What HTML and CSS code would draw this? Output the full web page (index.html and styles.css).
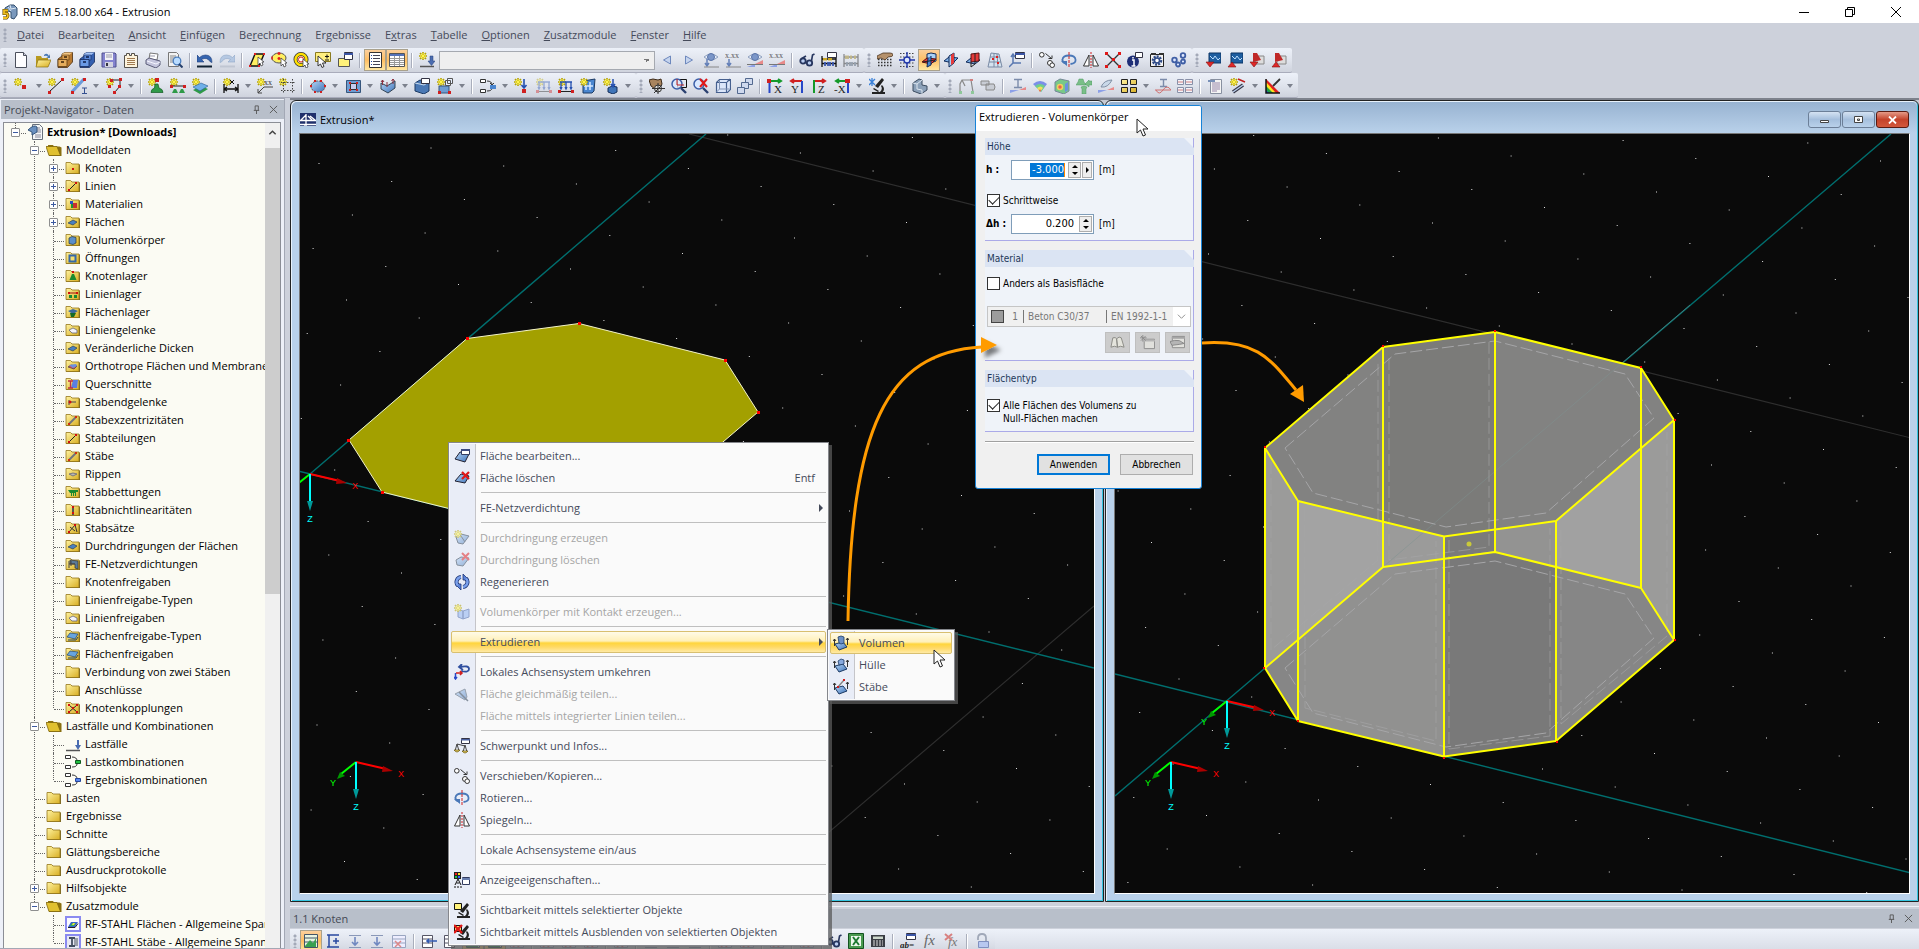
FILE: index.html
```html
<!DOCTYPE html>
<html lang="de">
<head>
<meta charset="utf-8">
<title>RFEM 5.18.00 x64 - Extrusion</title>
<link rel="stylesheet" href="styles.css">
</head>
<body>
<svg class="defs" aria-hidden="true">
<defs>
<linearGradient id="gy" x1="0" y1="0" x2="1" y2="1"><stop offset="0" stop-color="#fff3a0"/><stop offset="1" stop-color="#d8ae22"/></linearGradient>
<linearGradient id="gb" x1="0" y1="0" x2="1" y2="1"><stop offset="0" stop-color="#b4d4f6"/><stop offset="1" stop-color="#3f74b8"/></linearGradient>
</defs>
</svg>
<svg class="sprite" aria-hidden="true">
<symbol id="star" viewBox="0 0 16 16"><path d="M4 0v8M0 4h8M1 1l6 6M7 1L1 7" stroke="#b5a200" stroke-width="1.6"/><path d="M4 1v6M1 4h6M2 2l4 4M6 2L2 6" stroke="#fff450" stroke-width="1"/></symbol>
<symbol id="new" viewBox="0 0 16 16"><path d="M2.500 .5h8l3 3v12h-11z" fill="#fdfdff" stroke="#4a4f5c"/><path d="M10.500 .5v3h3" fill="#ccd" stroke="#4a4f5c"/></symbol>
<symbol id="open" viewBox="0 0 16 16"><path d="M1 4h5l1 2h6v8H1z" fill="#b89a20"/><path d="M3 8h13l-3 7H1z" fill="url(#gy)" stroke="#8a7010" stroke-width=".7"/><path d="M9 3q3-3 5 1l1-2v4h-4l2-1q-1-2-4-1z" fill="#4a7ab5"/></symbol>
<symbol id="cab1" viewBox="0 0 16 16"><path d="M1 7l4-3V2l3-1.500h7.500V10l-5 5.500H1z" fill="#b97a30" stroke="#4a2f10" stroke-width=".8"/><path d="M5 2l3-1.500h7.500L12 3H5z" fill="#f3c684"/><path d="M5 3h7v5H5z" fill="#dba050" stroke="#5a3a12" stroke-width=".6"/><path d="M1 7.500h9v7H1z" fill="#e5ad5c" stroke="#5a3a12" stroke-width=".8"/><path d="M4 10h3M7 5h3" stroke="#3a230a" stroke-width="1.400"/></symbol>
<symbol id="cab2" viewBox="0 0 16 16"><path d="M1 7l4-3V2l3-1.500h7.500V10l-5 5.500H1z" fill="#3560b0" stroke="#142a5c" stroke-width=".8"/><path d="M5 2l3-1.500h7.500L12 3H5z" fill="#a4c4f8"/><path d="M5 3h7v5H5z" fill="#5a88d8" stroke="#142a5c" stroke-width=".6"/><path d="M1 7.500h9v7H1z" fill="#6a9ae5" stroke="#142a5c" stroke-width=".8"/><path d="M4 10h3M7 5h3" stroke="#0c1c48" stroke-width="1.400"/></symbol>
<symbol id="save" viewBox="0 0 16 16"><path d="M1 1h13l1 1v13H1z" fill="#8483cf" stroke="#51508f"/><path d="M4 1h8v7H4z" fill="#f2f2f6"/><path d="M5 3h6M5 5h6" stroke="#99a"/><path d="M4 10h8v5H4z" fill="#d3d3e0"/><path d="M5 11h2v3H5z" fill="#334"/></symbol>
<symbol id="report" viewBox="0 0 16 16"><path d="M1.500 3.500h2v-2h3v2h2v-2h3v2h3v12h-13z" fill="#fdf3dc" stroke="#55504a"/><path d="M4 6.500h8M4 8.500h8M4 10.500h8M4 12.500h8" stroke="#a07a50"/></symbol>
<symbol id="print" viewBox="0 0 16 16"><path d="M4 7l1-6 8 1-1 6z" fill="#fff" stroke="#777"/><path d="M1 8l3-2 11 3v4l-4 3L1 12z" fill="#c4c5dc" stroke="#5b5c78"/><path d="M2 9l9 3 4-2" stroke="#f5f5ff" fill="none"/><path d="M5 4h5" stroke="#99a"/></symbol>
<symbol id="preview" viewBox="0 0 16 16"><path d="M1.500 .5h8l2 2v12h-10z" fill="#f2f2f2" stroke="#777"/><path d="M3 4h6M3 6h6M3 8h4M3 10h4" stroke="#888"/><circle cx="10" cy="9" r="3.800" fill="#b9dcff" stroke="#4a7dbd" stroke-width="1.300"/><path d="M12 12l3.500 3.500" stroke="#26406c" stroke-width="2"/></symbol>
<symbol id="undo" viewBox="0 0 16 16"><path d="M0 3v7h7L4.500 7.500q5.500-3 9 2.500l1.500 .5Q15 3 8.500 3 5 3 2.500 5.500z" fill="#3565b0" stroke="#1b3a78" stroke-width=".6"/><path d="M0 14.500h15" stroke="#123" stroke-width="2"/></symbol>
<symbol id="redo" viewBox="0 0 16 16"><path d="M16 3v7H9l2.500-2.500Q6 4.500 2.500 10l-1.500 .5Q1 3 7.500 3q3.500 0 6 2.500z" fill="#b5c8e2" stroke="#8fa6c6" stroke-width=".6"/><path d="M1 14.500h15" stroke="#c0c6d2" stroke-width="2"/></symbol>
<symbol id="selpar" viewBox="0 0 16 16"><path d="M1 14L6 2h9l-5 12z" fill="#ffef60" stroke="#111" stroke-width="1.400"/><path d="M5 1h2v2H5zM14 1h2v2h-2zM0 13h2v2H0zM9 13h2v2H9z" fill="#e02020"/><path d="M9 5v8l2-2 1 3 2-1-1-3h2z" fill="#fff" stroke="#333" stroke-width=".7"/></symbol>
<symbol id="selell" viewBox="0 0 16 16"><ellipse cx="8" cy="6" rx="7" ry="5" fill="#ffef60" stroke="#555"/><path d="M8 0v3M6.500 1.500h3M1 4.500v3M8 5v3M6.500 6.500h3" stroke="#e02020" stroke-width="1.500"/><path d="M10 6v8l2-2 1 3 2-1-1-3h2z" fill="#fff" stroke="#333" stroke-width=".7"/></symbol>
<symbol id="selcir" viewBox="0 0 16 16"><circle cx="8" cy="7.500" r="5.500" fill="#fdf8c0" stroke="#333" stroke-width="4"/><circle cx="8" cy="7.500" r="5.500" fill="none" stroke="#ffe000" stroke-width="2.400"/><circle cx="8" cy="7.500" r="2.500" fill="#fff" stroke="#e02020"/><path d="M10 7v8l2-2 1 3 2-1-1-3h2z" fill="#fff" stroke="#333" stroke-width=".7"/></symbol>
<symbol id="selpm" viewBox="0 0 16 16"><path d="M.5 .5h15v9H.5z" fill="#ffef80" stroke="#8a7a20"/><path d="M10 4.500h4M12 2.500v4M10 8h4" stroke="#111"/><path d="M3 4v10l2.500-2 1.500 3.500 2-1L7.500 11H11z" fill="#fff" stroke="#222" stroke-width=".9"/></symbol>
<symbol id="selwin" viewBox="0 0 16 16"><path d="M1.500 6.500h11v8h-11z" fill="#fff27a" stroke="#555"/><path d="M7.500 .5h8v7h-8z" fill="#fff" stroke="#334"/><path d="M7 1h9v2H7z" fill="#3b55a5"/></symbol>
<symbol id="list" viewBox="0 0 16 16"><path d="M2.500 .5h12v15h-12z" fill="#fff" stroke="#333"/><path d="M6 3.500h7M6 6.500h7M6 9.500h7M6 12.500h7" stroke="#445"/><path d="M4 3.500h1M4 6.500h1M4 9.500h1M4 12.500h1" stroke="#2344a0"/></symbol>
<symbol id="table" viewBox="0 0 16 16"><path d="M.5 1.500h15v13H.5z" fill="#fff" stroke="#555"/><path d="M1 2h14v2H1z" fill="#5572b8"/><path d="M1 6.500h14M1 8.500h14M1 10.500h14M1 12.500h14M5.500 4v10M10.500 4v10" stroke="#999"/></symbol>
<symbol id="lcase" viewBox="0 0 16 16"><use href="#star"/><path d="M11 4h3v5h2l-3.500 4.500L9 9h2z" fill="#4a6cb0" stroke="#24407c" stroke-width=".5"/><path d="M1 14.500h14" stroke="#555" stroke-width="1.500"/></symbol>
<symbol id="prev" viewBox="0 0 16 16"><path d="M11.500 4v8L4.500 8z" fill="#c5d4ee" stroke="#6d88bd"/></symbol>
<symbol id="next" viewBox="0 0 16 16"><path d="M4.500 4v8l7-4z" fill="#c5d4ee" stroke="#6d88bd"/></symbol>
<symbol id="eye1" viewBox="0 0 16 16"><path d="M1 5q7-6 14 0-7 6-14 0z" fill="#e8eef8" stroke="#8ea0bf"/><circle cx="8" cy="5" r="3.500" fill="#7b96c8" stroke="#5a74a8"/><path d="M4 7v6M2 11l2 3 2-3" stroke="#6480b8" stroke-width="1.500" fill="none"/><path d="M1 15h15" stroke="#888"/></symbol>
<symbol id="xx1" viewBox="0 0 16 16"><text x="0" y="6" font-size="8" font-family="Liberation Serif" fill="#555">x.xx</text><path d="M4 7v6M2 11l2 3 2-3" stroke="#6480b8" stroke-width="1.500" fill="none"/><path d="M1 15h15" stroke="#888"/></symbol>
<symbol id="eye2" viewBox="0 0 16 16"><path d="M1 5q7-6 14 0-7 6-14 0z" fill="#e8eef8" stroke="#8ea0bf"/><circle cx="8" cy="5" r="3.500" fill="#7b96c8" stroke="#5a74a8"/><path d="M0 15h8v-3z" fill="#8ca0e8"/><path d="M8 12l8-4v4z" fill="#e88a8a"/><path d="M0 12.500h16" stroke="#777"/></symbol>
<symbol id="xx2" viewBox="0 0 16 16"><text x="0" y="6" font-size="8" font-family="Liberation Serif" fill="#555">x.xx</text><path d="M0 15h8v-3z" fill="#8ca0e8"/><path d="M8 12l8-4v4z" fill="#e88a8a"/><path d="M0 12.500h16" stroke="#777"/></symbol>
<symbol id="glass" viewBox="0 0 16 16"><circle cx="4" cy="9" r="2.700" fill="#b9cdf0" stroke="#26355e" stroke-width="1.800"/><circle cx="10.500" cy="11" r="2.700" fill="#b9cdf0" stroke="#26355e" stroke-width="1.800"/><path d="M2 7l5-3M12.500 9l1-6 2-1" stroke="#26355e" stroke-width="1.600" fill="none"/></symbol>
<symbol id="abac" viewBox="0 0 16 16"><path d="M1 4v11M15 4v11M1 7h14M1 11.500h14" stroke="#111" stroke-width="1.300"/><path d="M3 6v2.500M5 6v2.500M8 6v2.500M10 6v2.500" stroke="#d8b020" stroke-width="1.800"/><path d="M4 10v4M7 10v4M9 10v4M12 10v4" stroke="#3a58b0" stroke-width="1.800"/><path d="M6.500 .5h9v5h-9z" fill="#fff" stroke="#334"/></symbol>
<symbol id="abac2" viewBox="0 0 16 16"><g opacity=".5"><path d="M1 2v13M15 2v13M1 5h14M1 11.500h14" stroke="#333" stroke-width="1.300"/><path d="M3 3.500V7M5 3.500V7M8 3.500V7M12 3.500V7" stroke="#a08820" stroke-width="1.800"/><path d="M4 10v4M7 10v4M9 10v4M12 10v4" stroke="#567" stroke-width="1.800"/></g></symbol>
<symbol id="hand" viewBox="0 0 16 16"><path d="M1 7.500h15M1 10.500h15M1 13.500h15" stroke="#333" stroke-dasharray="1.500 1.500" stroke-width="1.500"/><path d="M0 4l6-3h7q3 0 3 2t-5 2l-3 3-4-2-4 1z" fill="#b5916c" stroke="#4c3622" stroke-width=".8"/></symbol>
<symbol id="snap" viewBox="0 0 16 16"><path d="M1 1.500h15M1 5h15M1 11h15M1 14.500h15" stroke="#444" stroke-dasharray="1.500 1.500"/><circle cx="8" cy="8" r="3" fill="#dce6ff" stroke="#1e35a8" stroke-width="1.400"/><path d="M8 0v5M8 11v5M0 8h5M11 8h5" stroke="#1e35a8" stroke-width="1.400"/></symbol>
<symbol id="wp1" viewBox="0 0 16 16"><path d="M6 2l4-1 5 1v7l-5 2-4-1z" fill="#a9d0f8" stroke="#102a5a"/><path d="M1 10l5-4 9 1-5 5z" fill="#e63a3a" stroke="#5a1010"/><path d="M7 6l-1 9 4-2V4" fill="#4a86d0" stroke="#102a5a"/><path d="M2 10l12-2" stroke="#222"/></symbol>
<symbol id="wp2" viewBox="0 0 16 16"><path d="M1 9l5-4 9 1-5 5z" fill="#7eb2ea" stroke="#102a5a"/><path d="M6 4l5-3v10l-5 4z" fill="#a9d0f8" stroke="#102a5a"/><path d="M8 3l3-2v10l-3 2z" fill="#e63a3a"/></symbol>
<symbol id="wp3" viewBox="0 0 16 16"><path d="M1 10l5-4 9 2-5 4z" fill="#7eb2ea" stroke="#102a5a"/><path d="M6 2l8-1v8l-8 1z" fill="#e63a3a" stroke="#5a1010"/><path d="M6 10v5l4-3V1" fill="none" stroke="#222"/></symbol>
<symbol id="wp4" viewBox="0 0 16 16"><path d="M1 15L4 1l8 1 3 13z" fill="#d5e2ef" stroke="#7a8ba5"/><path d="M3 5h10M2 10h12M7 1v14M10 2l1 13" stroke="#7a8ba5"/><path d="M5 7h2M9 5h2M10 11h2" stroke="#e02020" stroke-width="2"/></symbol>
<symbol id="axw" viewBox="0 0 16 16"><path d="M6.500 .5h9v6h-9z" fill="#fff" stroke="#334"/><path d="M6 1h10v2H6z" fill="#3b55a5"/><path d="M4 3v8h8M4 11l-4 4M2 5l2-3 2 3" stroke="#5a78b0" stroke-width="1.500" fill="none"/></symbol>
<symbol id="move" viewBox="0 0 16 16"><circle cx="2.800" cy="2.800" r="2.300" fill="#fff" stroke="#333"/><circle cx="11" cy="11" r="2.500" fill="#fff" stroke="#333"/><circle cx="13.200" cy="13.200" r="2.300" fill="#fff" stroke="#333"/><path d="M6.500 1.500l6 5M13 3.500v3H9.500" stroke="#333" fill="none"/></symbol>
<symbol id="rot" viewBox="0 0 16 16"><path d="M5 11.500Q1 10.500 1.500 7.500 2 3.500 8 3.500t6.500 4T9.500 12" fill="none" stroke="#4a78b8" stroke-width="1.800"/><path d="M0 9h6v5z" fill="#4a78b8"/><path d="M8 0v16" stroke="#d02020" stroke-dasharray="3 1"/></symbol>
<symbol id="mir" viewBox="0 0 16 16"><path d="M6 3v11H.5zM10 3v11h5.500z" fill="#fff" stroke="#333"/><path d="M8 0v16" stroke="#d02020" stroke-dasharray="2 1"/></symbol>
<symbol id="cross" viewBox="0 0 16 16"><path d="M1 1l14 14M15 1L1 15" stroke="#333" stroke-width="1.400"/><path d="M0 0h3v3H0zM13 0h3v3h-3zM0 13h3v3H0zM13 13h3v3h-3zM7 6h3v3H7z" fill="#e01818"/></symbol>
<symbol id="info" viewBox="0 0 16 16"><circle cx="6" cy="9.500" r="6" fill="#1f2f78"/><path d="M5 8h2v6M4.500 14h4M6 5v1.500" stroke="#fff" stroke-width="1.500" fill="none"/><path d="M8.500 .5h7v5h-7z" fill="#fff" stroke="#334"/></symbol>
<symbol id="cfg" viewBox="0 0 16 16"><path d="M1.500 2.500h13v12h-13z" fill="#f3f3f3" stroke="#222"/><path d="M2 1h5v2H2zM10 1h5v2h-5z" fill="#333"/><circle cx="8" cy="8.500" r="4" fill="none" stroke="#2f4b88" stroke-width="2.500" stroke-dasharray="2 1"/><circle cx="8" cy="8.500" r="2.500" fill="#fff" stroke="#2f4b88" stroke-width="1.500"/></symbol>
<symbol id="gears" viewBox="0 0 16 16"><g fill="#dfe8ff" stroke="#3f5fa5" stroke-width="1.800"><circle cx="12" cy="3.500" r="2.300"/><circle cx="3.500" cy="8" r="2.300"/><circle cx="7" cy="12.500" r="2"/><circle cx="12" cy="9.500" r="2"/></g></symbol>
<symbol id="mdown" viewBox="0 0 16 16"><path d="M4 1h12v10H4z" fill="#1e5ea0" stroke="#0c3464"/><path d="M5 4l3 3 2-3 3 4 2-2" stroke="#bfe0ff" fill="none"/><path d="M1 10h8l-4 5z" fill="#e02828" stroke="#801010" stroke-width=".6"/></symbol>
<symbol id="mup" viewBox="0 0 16 16"><path d="M4 1h12v10H4z" fill="#1e5ea0" stroke="#0c3464"/><path d="M5 4l3 3 2-3 3 4 2-2" stroke="#bfe0ff" fill="none"/><path d="M1 15h8l-4-5z" fill="#e02828" stroke="#801010" stroke-width=".6"/></symbol>
<symbol id="pdf1" viewBox="0 0 16 16"><path d="M6 4h9v8H6z" fill="#ddd" stroke="#888"/><path d="M4 1h4l4 7-8 2z" fill="#c02828"/><path d="M1 10h8l-4 5z" fill="#e02828" stroke="#801010" stroke-width=".6"/></symbol>
<symbol id="pdf2" viewBox="0 0 16 16"><path d="M6 4h9v8H6z" fill="#ddd" stroke="#888"/><path d="M4 1h4l4 7-8 2z" fill="#c02828"/><path d="M1 15h8l-4-5z" fill="#e02828" stroke="#801010" stroke-width=".6"/></symbol>
<symbol id="node" viewBox="0 0 16 16"><use href="#star"/><path d="M8 7h4v4H8z" fill="#d02020"/></symbol>
<symbol id="line" viewBox="0 0 16 16"><use href="#star"/><path d="M1 14L14 2" stroke="#111"/><path d="M0 13h3v3H0zM13 0h3v3h-3z" fill="#d02020"/></symbol>
<symbol id="memb" viewBox="0 0 16 16"><use href="#star"/><path d="M1 14L13 1" stroke="#6d9bd8" stroke-width="3"/><path d="M0 13h3v3H0zM12 0h3v3h-3z" fill="#d02020"/><path d="M11 10h5M11 15.500h5M13.500 10v5" stroke="#345090"/></symbol>
<symbol id="poly" viewBox="0 0 16 16"><use href="#star"/><path d="M5 2h9v6l-5 6" stroke="#222" fill="none"/><path d="M4 1h3v3H4zM13 0h3v3h-3zM12 7h3v3h-3zM7 13h3v3H7zM2 7h3v3H2z" fill="#d02020"/></symbol>
<symbol id="nsup" viewBox="0 0 16 16"><use href="#star"/><path d="M7 6h3l1 4q4 1 4 4.500H3q0-3.500 3.500-4.500z" fill="#2f9a48" stroke="#115a22" stroke-width=".7"/><path d="M7 0h4v4H7z" fill="#d02020"/></symbol>
<symbol id="lsup" viewBox="0 0 16 16"><use href="#star"/><path d="M2 8h13" stroke="#222"/><path d="M0 7h3v3H0zM13 7h3v3h-3z" fill="#d02020"/><path d="M4 11h2l2 4H2zM11 11h2l2 4H9z" fill="#2f9a48"/></symbol>
<symbol id="fsup" viewBox="0 0 16 16"><use href="#star"/><path d="M1 12l8-4 7 3-8 5z" fill="#2f9a48"/><path d="M1 9l8-4 7 3-8 5z" fill="#6fb0e8" stroke="#285a90" stroke-width=".6"/></symbol>
<symbol id="dim" viewBox="0 0 16 16"><use href="#star"/><path d="M1 6v9M15 6v9M1 11h14M4 9l-3 2 3 2M12 9l3 2-3 2" stroke="#111" fill="none" stroke-width="1.300"/><path d="M7 2l4 4M11 2L7 6" stroke="#111"/></symbol>
<symbol id="lead" viewBox="0 0 16 16"><use href="#star"/><path d="M1 15L7 9h9M1 11v4h4" stroke="#444" fill="none"/><text x="7" y="7" font-size="8" font-family="Liberation Serif" fill="#333">xx</text></symbol>
<symbol id="grid" viewBox="0 0 16 16"><use href="#star"/><path d="M2 4.500h14M2 12.500h14M4.500 1v15M13.500 1v15" stroke="#444" stroke-dasharray="1.500 1.500"/></symbol>
<symbol id="surf" viewBox="0 0 16 16"><ellipse cx="8" cy="8.500" rx="7" ry="5.500" fill="url(#gb)" stroke="#555" stroke-dasharray="2 1"/><path d="M4 2h2v2H4zM10 2h2v2h-2zM0 7h2v2H0zM14 7h2v2h-2zM4 13h2v2H4zM10 13h2v2h-2z" fill="#d02020"/></symbol>
<symbol id="opn" viewBox="0 0 16 16"><path d="M1.500 2.500h14v12h-14z" fill="#6e9cd2" stroke="#35557c"/><path d="M5.500 5.500h6v6h-6z" fill="#c8ccf0" stroke="#333"/><path d="M4 4h2v2H4zM11 4h2v2h-2zM4 11h2v2H4zM11 11h2v2h-2z" fill="#d02020"/></symbol>
<symbol id="shell" viewBox="0 0 16 16"><path d="M1 5l6 3 8-5v7l-7 5-7-4z" fill="url(#gb)" stroke="#345"/><path d="M2.500 7V2M7 9V4M13 6V1M1 4l1.500-2L4 4M11.500 3L13 1l1.500 2" stroke="#8a3040" fill="none"/></symbol>
<symbol id="solid" viewBox="0 0 16 16"><path d="M1 5l5-3 9 2v9l-5 3-9-3z" fill="#4a78b4" stroke="#1c3a64"/><path d="M1 5l9 2 5-3" stroke="#cde" fill="none"/><path d="M7.500 .5h8v5h-8z" fill="#fff" stroke="#334"/></symbol>
<symbol id="solid2" viewBox="0 0 16 16"><use href="#star"/><path d="M2 8h10v7H2z" fill="#6e9cd2" stroke="#35557c"/><path d="M8.500 2.500h5v5h-5zM10.500 .5h5v5h-5z" fill="#e8f0ff" stroke="#555"/><path d="M1 13h3v3H1zM11 13h3v3h-3z" fill="#d02020"/></symbol>
<symbol id="comb" viewBox="0 0 16 16"><path d="M.5 1.500h5v3h-5zM.5 11.500h5v3h-5z" fill="#fff" stroke="#333"/><path d="M7 3q5 0 5 4M7 13q5 0 5-3M10 5l2 2 2-2" stroke="#333" fill="none"/><path d="M10 7h6v4h-6z" fill="#4a86d0"/></symbol>
<symbol id="combg" viewBox="0 0 16 16"><path d="M.5 1.500h5v3h-5zM.5 11.500h5v3h-5z" fill="#fff" stroke="#333"/><path d="M7 3q5 0 5 4M7 13q5 0 5-3" stroke="#333" fill="none"/><path d="M10.500 6.500h5v3h-5z" fill="#20c040" stroke="#0c5a1c"/></symbol>
<symbol id="combb" viewBox="0 0 16 16"><path d="M.5 1.500h5v3h-5zM.5 11.500h5v3h-5z" fill="#fff" stroke="#333"/><path d="M7 3q5 0 5 4M7 13q5 0 5-3" stroke="#333" fill="none"/><path d="M10.500 6.500h5v3h-5z" fill="#5a8af0" stroke="#24449a"/></symbol>
<symbol id="nload" viewBox="0 0 16 16"><use href="#star"/><path d="M10 1v9M7.500 7l2.500 3 2.500-3" stroke="#2450b0" stroke-width="1.600" fill="none"/><path d="M8 11h4v4H8z" fill="#d02020"/></symbol>
<symbol id="mload" viewBox="0 0 16 16"><use href="#star"/><path d="M2 4h12M3 4v7M8 4v7M13 4v7M2 9l1 2 1-2M7 9l1 2 1-2M12 9l1 2 1-2" stroke="#2450b0" stroke-width="1.300" fill="none"/><path d="M1 13.500h14" stroke="#222"/><path d="M0 12h3v3H0zM13 12h3v3h-3z" fill="#d02020"/></symbol>
<symbol id="sload" viewBox="0 0 16 16"><path d="M3 3l12-2-1 12-2 2H3z" fill="#4a86d0" stroke="#1c3a64"/><path d="M6 5v7M10 4v8M4 8h9" stroke="#d5e8ff" stroke-width="1.500"/><use href="#star"/></symbol>
<symbol id="vload" viewBox="0 0 16 16"><use href="#star"/><path d="M5 10l4-2 5 1v5l-4 2-5-2z" fill="#3f74b8" stroke="#16305a"/><path d="M10 1v8M8 6l2 3 2-3" stroke="#2450b0" stroke-width="1.500" fill="none"/></symbol>
<symbol id="pan" viewBox="0 0 16 16"><path d="M0 2l4-1 5 1 3-1 1 5-2 4-5 1-4-3z" fill="#a8845e" stroke="#3c2a18"/><circle cx="9" cy="10.500" r="3.500" fill="#ddd" stroke="#333"/><path d="M9 5v11M3 10.500h13M5 15l8-8" stroke="#333"/></symbol>
<symbol id="zoomw" viewBox="0 0 16 16"><path d="M6.500 1.500h9v8h-9z" fill="none" stroke="#111"/><circle cx="6" cy="6" r="5" fill="#d8e8ff" fill-opacity=".8" stroke="#3a5ea8" stroke-width="1.500"/><path d="M10 10l5 5" stroke="#2a4070" stroke-width="2.400"/><path d="M6 1v6h7" stroke="#c02020" fill="none"/></symbol>
<symbol id="zoomx" viewBox="0 0 16 16"><circle cx="6" cy="6" r="5" fill="#d8e8ff" stroke="#3a5ea8" stroke-width="1.500"/><path d="M10 10l5 5" stroke="#2a4070" stroke-width="2.400"/><path d="M7 1l7 8M14 1L7 9" stroke="#e01818" stroke-width="2"/></symbol>
<symbol id="cube" viewBox="0 0 16 16"><path d="M1.500 4.500l3-3h11v10l-3 3h-11zM1.500 4.500h10v10M12 4l3-3" fill="#dbe6fa" stroke="#46608f" stroke-width="1.200"/><path d="M4.500 2v9h10M4.500 11l-3 3" stroke="#8093b5" fill="none"/></symbol>
<symbol id="boxes" viewBox="0 0 16 16"><g fill="#cfd9ee" stroke="#53698f"><path d="M8.500 .5h7v6h-7z"/><path d="M4.500 4.500h7v6h-7z"/><path d="M.5 9.500h7v6h-7z"/></g></symbol>
<symbol id="vx" viewBox="0 0 16 16"><path d="M3 3h11M11 1l3 2-3 2" stroke="#159a2a" stroke-width="2" fill="none"/><path d="M2.500 2v13" stroke="#2848c8" stroke-width="2"/><path d="M0 1h4v4H0z" fill="#d02020"/><text x="7" y="15" font-size="11" font-family="Liberation Serif" fill="#222">X</text></symbol>
<symbol id="vy" viewBox="0 0 16 16"><path d="M13 3H2M5 1L2 3l3 2" stroke="#d02020" stroke-width="2" fill="none"/><path d="M13 3v12" stroke="#2848c8" stroke-width="2"/><text x="2" y="15" font-size="11" font-family="Liberation Serif" fill="#222">Y</text></symbol>
<symbol id="vz" viewBox="0 0 16 16"><path d="M3 3h11M11 1l3 2-3 2" stroke="#d02020" stroke-width="2" fill="none"/><path d="M3 2v13" stroke="#159a2a" stroke-width="2"/><text x="7" y="15" font-size="11" font-family="Liberation Serif" fill="#222">Z</text></symbol>
<symbol id="vmx" viewBox="0 0 16 16"><path d="M13 3H2M5 1L2 3l3 2" stroke="#159a2a" stroke-width="2" fill="none"/><path d="M14 4v11" stroke="#2848c8" stroke-width="2"/><path d="M11 1h5v4h-5z" fill="#d02020"/><text x="0" y="15" font-size="11" font-family="Liberation Serif" fill="#222">-X</text></symbol>
<symbol id="micro" viewBox="0 0 16 16"><path d="M0 1l6 6M6 1L0 7M3 0v8" stroke="#3a80d8" stroke-width="1.300"/><path d="M6 8l7-8 2 2-6 8zM3 14h13v2H3zM13 7q4 4 0 8l-2-1q3-3 1-6zM5 10l5 3-1 1-5-3z" fill="#222"/></symbol>
<symbol id="microy" viewBox="0 0 16 16"><path d="M.5 1.500h7v6h-7z" fill="#fff27a" stroke="#111"/><path d="M6 9l7-8 2 2-6 8zM3 14h13v2H3zM13 7q4 4 0 8l-2-1q3-3 1-6zM5 10l5 3-1 1-5-3z" fill="#222"/></symbol>
<symbol id="microx" viewBox="0 0 16 16"><use href="#microy"/><path d="M0 1l8 8M8 1L0 9" stroke="#e01818" stroke-width="2.400"/></symbol>
<symbol id="blk" viewBox="0 0 16 16"><path d="M1 5l6-4 3 1v5l5 1v4l-6 4-8-3z" fill="#8ba0b8" stroke="#3c4c60"/><path d="M1 5l4 1v5l5 1M10 12v4M5 6l5-4" stroke="#dde6f0" fill="none"/></symbol>
<symbol id="frame" viewBox="0 0 16 16"><path d="M2 14V6l2-4h9l2 12M4 2l3 6" stroke="#888" fill="none" stroke-width="1.200"/><path d="M1 13h3v3H1zM13 13h3v3h-3z" fill="#8fc89a"/><path d="M12 1h3v2h-3z" fill="#d08080"/></symbol>
<symbol id="tube" viewBox="0 0 16 16"><path d="M1 3h8v4H1zM6 6h8q2 3 0 6H6z" fill="#c8ccd4" stroke="#888"/></symbol>
<symbol id="ibeam" viewBox="0 0 16 16"><path d="M4 1.500h8M4 9.500h8M8 2v7" stroke="#7c8cab" stroke-width="1.400"/><path d="M0 15l9-3H0z" fill="#8ca0e8"/><path d="M9 12l7-3v3z" fill="#e88a8a"/></symbol>
<symbol id="rainb" viewBox="0 0 16 16"><path d="M1 6q7-6 14 0l-6 8z" fill="#7b8fe8"/><path d="M3 8q5-4 10 0l-4 6z" fill="#6fd08a"/><path d="M5 10q4-3 6 0l-3 4z" fill="#f0e060"/><path d="M7 12q1-1 2 0l-1 2z" fill="#e85050"/></symbol>
<symbol id="rcube" viewBox="0 0 16 16"><path d="M1 4l5-3 9 2v10l-5 3-9-3z" fill="#78c888" stroke="#789"/><circle cx="6" cy="9" r="2.500" fill="#e86050" stroke="#f0d060" stroke-width="1.500"/><path d="M11 6l3-2v8l-3 2z" fill="#6a90e0"/></symbol>
<symbol id="react" viewBox="0 0 16 16"><path d="M3 1h4l1 3 2 3H0l2-3zM5 9l3-1 3 1-1 2v5H6v-5zM16 3v4h-3v2l-4-3 4-4v1z" fill="#7abf88" stroke="#4f9a60" stroke-width=".5"/></symbol>
<symbol id="stress" viewBox="0 0 16 16"><path d="M3 9q3-7 11-7-4 8-11 7z" fill="#c9d8e8" stroke="#8090a5"/><path d="M0 15l9-3H0z" fill="#8ca0e8"/><path d="M9 12l7-3v3z" fill="#e88a8a"/></symbol>
<symbol id="four" viewBox="0 0 16 16"><g fill="url(#gy)" stroke="#222"><path d="M.5 1.500h6v5h-6zM9.500 1.500h6v5h-6zM.5 9.500h6v5h-6zM9.500 9.500h6v5h-6z"/></g></symbol>
<symbol id="wave" viewBox="0 0 16 16"><path d="M5 1.500h7M5 8.500h7M8.500 2v6" stroke="#7c8cab" stroke-width="1.400"/><path d="M0 12h16M1 12q3 6 7 0t8 0" stroke="#d07070" fill="none"/></symbol>
<symbol id="tbl4" viewBox="0 0 16 16"><g fill="#f4f4fa" stroke="#8890a8"><path d="M.5 1.500h6v5h-6zM8.500 1.500h7v5h-7zM.5 9.500h6v5h-6zM8.500 9.500h7v5h-7z"/></g><path d="M1 4h5M9 4h6M1 12h5M9 12h6" stroke="#d08080"/></symbol>
<symbol id="page" viewBox="0 0 16 16"><path d="M3.500 1.500h11v14h-11z" fill="#f4f4f4" stroke="#8890a0"/><path d="M5 5h8M5 7h8M5 9h8M5 11h8M5 13h5" stroke="#98a"/><path d="M1 2h7v2H1z" fill="#7890b8"/></symbol>
<symbol id="magic" viewBox="0 0 16 16"><use href="#star"/><path d="M3 14l10-7" stroke="#334" stroke-width="3.400"/><path d="M3 14l10-7" stroke="#b8cce8" stroke-width="1.500"/><path d="M8 1l7 3" stroke="#c02020" stroke-width="1.500"/></symbol>
<symbol id="spec" viewBox="0 0 16 16"><path d="M1 1v14h14z" fill="#e02020"/><path d="M1 4v11h10z" fill="#ffe020"/><path d="M1 8v7h7z" fill="#20a040"/><path d="M1 12v3h3z" fill="#2040e0"/><path d="M1 1v14h14" stroke="#111" stroke-width="1.500" fill="none"/><path d="M8 8l7-7" stroke="#333" stroke-width="1.800"/></symbol>
<symbol id="fold" viewBox="0 0 16 16"><path d="M1 3h5l1.500 1.500H15V14H1z" fill="#7a6a2a"/><path d="M1 2.500h4.500L7 4h7v9.500H1z" fill="url(#gy)" stroke="#94761a" stroke-width=".8"/></symbol>
<symbol id="foldo" viewBox="0 0 16 16"><path d="M2 3h5l1 1.500h5.500l2 1V14H3z" fill="#8a7010"/><path d="M0 4.500h11l3.500 9H3z" fill="#e0c030" stroke="#7d650c" stroke-width=".8"/></symbol>
<symbol id="f-node" viewBox="0 0 16 16"><use href="#fold"/><path d="M7 8h2v2H7z" fill="#d01010"/></symbol>
<symbol id="f-line" viewBox="0 0 16 16"><use href="#fold"/><path d="M4 12l7-7" stroke="#222"/><path d="M3 11h2v2H3zM10 4h2v2h-2z" fill="#d01010"/></symbol>
<symbol id="f-mat" viewBox="0 0 16 16"><use href="#fold"/><path d="M5 5h3v3H5z" fill="#2a50c0"/><path d="M6 8h3v4H6z" fill="#1a9a30"/><path d="M8 7h4v5H8z" fill="#c83030"/></symbol>
<symbol id="f-surf" viewBox="0 0 16 16"><use href="#fold"/><path d="M3 9l5-3 4 2-4 3z" fill="#4a80c0" stroke="#234" stroke-width=".6"/></symbol>
<symbol id="f-orth" viewBox="0 0 16 16"><use href="#fold"/><path d="M3 9l3-2 6 1-3 3z" fill="#e05060" stroke="#234" stroke-width=".6"/><path d="M4 7l7-1 1 2-4 2z" fill="#6a90e0"/></symbol>
<symbol id="f-vol" viewBox="0 0 16 16"><use href="#fold"/><path d="M4 6l3-1.500 4 1V11l-3 1.500-4-1z" fill="#5a8ec8" stroke="#234" stroke-width=".7"/></symbol>
<symbol id="f-opn" viewBox="0 0 16 16"><use href="#fold"/><path d="M4.500 5.500h6v6h-6z" fill="#f3df70" stroke="#3468a8" stroke-width="2"/></symbol>
<symbol id="f-ns" viewBox="0 0 16 16"><use href="#fold"/><path d="M7 6h2l2.500 6h-7z" fill="#1a8a30"/><path d="M7 3h2v2H7z" fill="#d01010"/></symbol>
<symbol id="f-ls" viewBox="0 0 16 16"><use href="#fold"/><path d="M3 7h9" stroke="#a01010"/><path d="M3 6h2v2H3zM11 6h2v2h-2z" fill="#d01010"/><path d="M4 9h3v3H4zM9 9h3v3H9z" fill="#1a8a30"/></symbol>
<symbol id="f-fs" viewBox="0 0 16 16"><use href="#fold"/><path d="M3 7l5-2 5 2-5 3z" fill="#3a6aa0"/><path d="M5 9h6l-2 4H6z" fill="#156a28"/></symbol>
<symbol id="f-wh" viewBox="0 0 16 16"><use href="#fold"/><path d="M4 8l4-2 4 2v3H7z" fill="#f4f4f8" stroke="#667" stroke-width=".8"/></symbol>
<symbol id="f-rib" viewBox="0 0 16 16"><use href="#fold"/><path d="M4 8l4-1 4 1-4 2z" fill="#b8b8b4" stroke="#667" stroke-width=".8"/></symbol>
<symbol id="f-i" viewBox="0 0 16 16"><use href="#fold"/><path d="M8 4h5l-1 8H6z" fill="#5a7ee0"/><path d="M3 5h5M3 12h5M5.500 5v7" stroke="#c03040" stroke-width="1.300"/></symbol>
<symbol id="f-eg" viewBox="0 0 16 16"><use href="#fold"/><path d="M4 6v5M4 8h7" stroke="#445"/><circle cx="5" cy="8" r="1.500" fill="#d01010"/></symbol>
<symbol id="f-mem" viewBox="0 0 16 16"><use href="#fold"/><path d="M4 12l7-7" stroke="#70737c" stroke-width="2"/><path d="M3 11h2v2H3zM10 4h2v2h-2z" fill="#d03010"/></symbol>
<symbol id="f-gr" viewBox="0 0 16 16"><use href="#fold"/><path d="M3 6h10v2h-2v4h-1V9H9v3H8V9H7v3H6V9H5z" fill="#1a8a30"/></symbol>
<symbol id="f-rv" viewBox="0 0 16 16"><use href="#fold"/><path d="M8 4v9" stroke="#555" stroke-width="2"/><path d="M7 4h2v2H7zM7 10h2v2H7z" fill="#d01010"/></symbol>
<symbol id="f-set" viewBox="0 0 16 16"><use href="#fold"/><path d="M4 12l6-7 2 7M5 7l5 4" stroke="#333" fill="none"/><path d="M3 11h2v2H3zM9 4h2v2H9z" fill="#d01010"/></symbol>
<symbol id="f-mesh" viewBox="0 0 16 16"><use href="#fold"/><path d="M5 4l8 1v8l-3-1V8H5z" fill="#5a7a98" stroke="#333" stroke-width=".7"/><path d="M4 5v7M6 5v5M4 8h6" stroke="#444"/></symbol>
<symbol id="f-rel" viewBox="0 0 16 16"><use href="#fold"/><path d="M2 9l3-4 8 1-3 5z" fill="#66a4e0" stroke="#246" stroke-width=".7"/><path d="M3 12h8l2-3" stroke="#246" fill="none"/></symbol>
<symbol id="f-cpl" viewBox="0 0 16 16"><use href="#fold"/><path d="M4 5l8 7M12 5l-8 7" stroke="#222"/><path d="M3 4h2v2H3zM11 4h2v2h-2zM3 11h2v2H3zM11 11h2v2h-2zM7 7h2v2H7z" fill="#d01010"/></symbol>
<symbol id="t-root" viewBox="0 0 16 16"><path d="M5.500 .5h7l3 3v12h-10z" fill="#f4f6f8" stroke="#68707c"/><path d="M9 4h4M10 6h4M10 8h4M8 11h6M8 13h6" stroke="#889"/><path d="M1 6q6-6 9-3v5l-5 3v-3z" fill="#6a90c0" stroke="#35557c"/></symbol>
<symbol id="t-lc" viewBox="0 0 16 16"><path d="M12 4h2v5h2l-3 5-3-5h2z" fill="#4a6cb0"/><path d="M1 14.500h14" stroke="#555" stroke-width="1.500"/></symbol>
<symbol id="t-m1" viewBox="0 0 16 16"><path d="M1 1h14v14H1z" fill="#fafaff" stroke="#8a8af0" stroke-width="2"/><path d="M3 11l3-5h7l-3 5z" fill="#3a60d0"/><path d="M5 10l2-3h4l-2 3z" fill="#30b060"/><path d="M7 9l1-2h2l-1 2z" fill="#f0e040"/><path d="M3 11.500h7l3-4" stroke="#222" fill="none"/></symbol>
<symbol id="t-m2" viewBox="0 0 16 16"><path d="M1 1h14v14H1z" fill="#e8e8f4" stroke="#8a8af0" stroke-width="2"/><path d="M9 4h4v8H9z" fill="#9a9ea8"/><path d="M4 4h6M4 12h6M7 4v8" stroke="#444e60" stroke-width="1.800" fill="none"/></symbol>
<symbol id="c-edit" viewBox="0 0 16 16"><path d="M1 11l5-7 9 2-4 8z" fill="url(#gb)" stroke="#223"/><path d="M7.500 1.500h8v5h-8z" fill="#fff" stroke="#333c60"/><path d="M7 1h9v2H7z" fill="#3b4a80"/></symbol>
<symbol id="c-del" viewBox="0 0 16 16"><path d="M1 11l6-7 8 2-4 7z" fill="url(#gb)" stroke="#223"/><path d="M8 2l7 7M15 2L8 9" stroke="#e01818" stroke-width="2.200"/></symbol>
<symbol id="c-int" viewBox="0 0 16 16"><g opacity=".5"><path d="M2 7l5-3 8 2-6 8-5-1z" fill="url(#gb)" stroke="#234"/><path d="M5 3l6 9" stroke="#234"/><use href="#star"/></g></symbol>
<symbol id="c-intx" viewBox="0 0 16 16"><g opacity=".5"><path d="M2 8l5-3 8 1-6 8-6-1z" fill="url(#gb)" stroke="#234"/><path d="M8 1l7 7M15 1L8 8" stroke="#e01818" stroke-width="2"/></g></symbol>
<symbol id="c-reg" viewBox="0 0 16 16"><g fill="none" stroke="#1c3474" stroke-width="4"><path d="M7 3a5 5 0 0 0-3 8.500M9 13a5 5 0 0 0 3-8.500"/></g><path d="M1 10h6v6zM15 6H9V0z" fill="#5a82d8" stroke="#1c3474" stroke-width=".8"/><g fill="none" stroke="#7aa0ec" stroke-width="2.400"><path d="M7 3a5 5 0 0 0-3 8.500M9 13a5 5 0 0 0 3-8.500"/></g></symbol>
<symbol id="c-vol" viewBox="0 0 16 16"><g opacity=".55"><path d="M4 5l5 2v8l-5-2zM9 7l6-2v8l-6 2z" fill="#94b8f0" stroke="#4a68a8"/><use href="#star"/></g></symbol>
<symbol id="c-axis" viewBox="0 0 16 16"><path d="M6 3q9-2 9 2t-8 2M8 0L5 3l4 3" fill="none" stroke="#2f4fa0" stroke-width="1.800"/><path d="M1.500 9v6M0 13l1.500 2L3 13" stroke="#2848c8" stroke-width="1.500" fill="none"/><path d="M2 9h6M6 7l2 2-2 2" stroke="#d02020" stroke-width="1.600" fill="none"/></symbol>
<symbol id="c-div" viewBox="0 0 16 16"><g opacity=".5"><path d="M1 8l10-5 2 8-2 3z" fill="url(#gb)" stroke="#456"/><path d="M5 6l9 9" stroke="#234" stroke-width="1.500"/></g></symbol>
<symbol id="c-scale" viewBox="0 0 16 16"><path d="M7.500 .5h8v5h-8z" fill="#fff" stroke="#334"/><path d="M7 1h9v1.500H7z" fill="#4a60a0"/><path d="M3 6l8 2M3 6l-2 7M3 6l2 7M11 7l-2 7M11 7l2 7" stroke="#444"/><path d="M0 12h6q-3 4-6 0zM8 13h6q-3 4-6 0z" fill="#e8d060" stroke="#665510" stroke-width=".7"/></symbol>
<symbol id="c-disp" viewBox="0 0 16 16"><path d="M0 0h7v7H0z" fill="#222"/><path d="M1 1h2v2H1z" fill="#f02020"/><path d="M4 1h2v2H4z" fill="#ffe020"/><path d="M1 4h2v2H1z" fill="#20c040"/><path d="M4 4h2v2H4z" fill="#3060ff"/><path d="M4 7L1 13M4 7l3 6M2.500 11h3" stroke="#111" fill="none"/><path d="M0 15h8" stroke="#111" stroke-dasharray="2 1"/><path d="M8.500 5.500h7v7h-7z" fill="#fff" stroke="#333c60"/><path d="M8 6h8v2H8z" fill="#6a80b0"/></symbol>
<symbol id="c-ev" viewBox="0 0 16 16"><path d="M2 9l8-2 4 5-8 3z" fill="url(#gb)" stroke="#1c3a64"/><path d="M5 2l3-1 3 1v6l-3 1-2-1z" fill="#6a90c8" stroke="#1c3a64" stroke-width=".8"/><path d="M1.500 11V4M0 6l1.500-2L3 6M14.500 10V3M13 5l1.500-2L16 5" stroke="#333" fill="none"/></symbol>
<symbol id="c-eh" viewBox="0 0 16 16"><path d="M2 9l8-2 4 5-8 3z" fill="url(#gb)" stroke="#1c3a64"/><path d="M5 4l3-2 3 1v4l-5 1z" fill="#88aade" stroke="#1c3a64" stroke-width=".8"/><path d="M1.500 11V4M0 6l1.500-2L3 6M14.500 10V3M13 5l1.500-2L16 5" stroke="#333" fill="none"/></symbol>
<symbol id="c-es" viewBox="0 0 16 16"><path d="M2 9l8-2 4 5-8 3z" fill="url(#gb)" stroke="#1c3a64"/><path d="M5 8l6-7" stroke="#888" stroke-width="1.400"/><path d="M4 7h2v2H4zM10 0h2v2h-2z" fill="#d02020"/><path d="M1.500 11V4M0 6l1.500-2L3 6M14.500 10V3M13 5l1.500-2L16 5" stroke="#333" fill="none"/></symbol>
<symbol id="b-edit" viewBox="0 0 16 16"><path d="M1.500 1.500h13v13h-13z" fill="#e8f4e0" stroke="#456"/><path d="M1 5h14M1 9h14" stroke="#456"/><path d="M2 13l5-6 3 3 3-5v9H2z" fill="#3aa050"/></symbol>
<symbol id="b-ins" viewBox="0 0 16 16"><path d="M2 2h12M2 14h12M4 2v12" stroke="#2848a0" stroke-width="1.500"/><path d="M8 8h6M11 5v6" stroke="#2848a0" stroke-width="1.500"/></symbol>
<symbol id="b-dn" viewBox="0 0 16 16"><path d="M2 2.500h12M2 14.500h12" stroke="#8a98b8"/><path d="M8 4v7M5 9l3 3 3-3" stroke="#7088c0" stroke-width="1.600" fill="none"/></symbol>
<symbol id="b-x" viewBox="0 0 16 16"><path d="M1.500 2.500h13v12h-13z" fill="#eef" stroke="#99a5c0"/><path d="M1 6h14M1 10h14" stroke="#99a5c0"/><path d="M4 8l6 6M10 8l-6 6" stroke="#d88" stroke-width="1.500"/></symbol>
<symbol id="b-col" viewBox="0 0 16 16"><path d="M1.500 2.500h10v12h-10z" fill="#fff" stroke="#556"/><path d="M2 6h9M2 10h9" stroke="#556"/><path d="M6 8h10M8 6L6 8l2 2" stroke="#2f58b0" stroke-width="1.600" fill="none"/></symbol>
<symbol id="b-xls" viewBox="0 0 16 16"><path d="M.5 .5h15v15H.5z" fill="#4a9a50" stroke="#125220"/><path d="M3 3h10v10H3z" fill="#eef8ee"/><path d="M5 4l6 8M11 4l-6 8" stroke="#1e7a32" stroke-width="2"/></symbol>
<symbol id="b-calc" viewBox="0 0 16 16"><path d="M1 2h14v12H1z" fill="#3a3d44"/><path d="M3 3.500h10v2.500H3z" fill="#cdd8cc"/><path d="M3 8h10M3 10h10M3 12h10" stroke="#ddd" stroke-dasharray="2 1"/></symbol>
<symbol id="b-ab" viewBox="0 0 16 16"><path d="M6.500 .5h9v6h-9z" fill="#fff" stroke="#334"/><path d="M6 1h10v2H6z" fill="#3b55a5"/><text x="0" y="15" font-size="9" font-weight="bold" font-style="italic" font-family="Liberation Serif" fill="#222">ab=</text></symbol>
<symbol id="b-fx" viewBox="0 0 16 16"><text x="2" y="12" font-size="15" font-style="italic" font-family="Liberation Serif" fill="#666">fx</text></symbol>
<symbol id="b-fxx" viewBox="0 0 16 16"><text x="4" y="13" font-size="13" font-style="italic" font-family="Liberation Serif" fill="#777">fx</text><path d="M1 1l7 6M8 1L1 7" stroke="#d88080" stroke-width="2"/></symbol>
<symbol id="b-lock" viewBox="0 0 16 16"><path d="M4 7V5q0-4 4-4t4 4v3" stroke="#a0a8b8" stroke-width="1.800" fill="none"/><path d="M4.500 8.500h10v6h-10z" fill="#b8c8f0" stroke="#8090c0"/></symbol>
<symbol id="cursor" viewBox="0 0 13 20"><path d="M1 1v14l3.500-3 2.500 6 2.500-1L7 11h5z" fill="#fff" stroke="#222"/></symbol>
<g id="triad" font-family="Liberation Sans" font-size="9" text-anchor="middle">
<path d="M0 0l28 6.500" stroke="#f00" stroke-width="2"/><path d="M27 4l10 5-11 1z" fill="#a00"/><text x="45" y="15" fill="#f00">X</text>
<path d="M0 0l-15 12" stroke="#0f0" stroke-width="2"/><path d="M-19 17l3-7 5 4z" fill="#090"/><text x="-23" y="24" fill="#0f0">Y</text>
<path d="M0 0v28" stroke="#0ff" stroke-width="2"/><path d="M-3 27h6l-3 10z" fill="#099"/><text x="0" y="48" fill="#0ff">Z</text>
</g>
<g id="d1"><path d="M0 0h1v1H0z" fill="#ddd"/></g>
<g id="d2"><use href="#d1"/><use href="#d1" x="72.700" y="18"/></g>
<g id="d4"><use href="#d2"/><use href="#d2" x="145.400" y="36"/></g>
<g id="d8"><use href="#d4"/><use href="#d4" x="290.800" y="72"/></g>
<g id="d16"><use href="#d8"/><use href="#d8" x="581.600" y="144"/></g>
<g id="d32"><use href="#d16"/><use href="#d16" x="1163.200" y="288"/></g>
<g id="e2"><use href="#d32"/><use href="#d32" x="-39.300" y="33.500"/></g>
<g id="e4"><use href="#e2"/><use href="#e2" x="-78.600" y="67"/></g>
<g id="e8"><use href="#e4"/><use href="#e4" x="-157.200" y="134"/></g>
<g id="e16"><use href="#e8"/><use href="#e8" x="-314.400" y="268"/></g>
<g id="e32"><use href="#e16"/><use href="#e16" x="-628.800" y="536"/></g>
</svg>

<header class="titlebar">
<svg class="appicon" viewBox="0 0 16 16"><path d="M3 4l5-3 4 0 3 3v7l-3 4-3-1V8L3 6z" fill="#7a98bc" stroke="#34506e"/><path d="M8 1l1 4 5-1M6 3l3 4" stroke="#dce8f4" fill="none"/><path d="M6 6.500H2v3h3q2 2.500-.5 4.500H1" fill="none" stroke="#5a4400" stroke-width="3"/><path d="M6 6.500H2v3h3q2 2.500-.5 4.500H1" fill="none" stroke="#f0c020" stroke-width="1.800"/></svg>
<h1>RFEM 5.18.00 x64 - Extrusion</h1>
<div class="winctl">
<button aria-label="Minimieren"><svg viewBox="0 0 10 10"><path d="M0 5.500h10" stroke="#000"/></svg></button>
<button aria-label="Wiederherstellen"><svg viewBox="0 0 10 10"><path d="M.5 2.500h7v7h-7zM2.500 2V.5h7v7H8" fill="none" stroke="#000"/></svg></button>
<button aria-label="Schließen"><svg viewBox="0 0 10 10"><path d="M0 0l10 10M10 0L0 10" stroke="#000"/></svg></button>
</div>
</header>

<nav class="menubar"><i class="grip"></i>
<a href="#"><u>D</u>atei</a><a href="#">Bearbeite<u>n</u></a><a href="#"><u>A</u>nsicht</a><a href="#"><u>E</u>infügen</a><a href="#">Be<u>r</u>echnung</a><a href="#">Er<u>g</u>ebnisse</a><a href="#">E<u>x</u>tras</a><a href="#"><u>T</u>abelle</a><a href="#"><u>O</u>ptionen</a><a href="#"><u>Z</u>usatzmodule</a><a href="#"><u>F</u>enster</a><a href="#"><u>H</u>ilfe</a>
</nav>

<div class="toolrow">
<div class="group"><i class="grip"></i>
<button><svg><use href="#new"/></svg></button><button><svg><use href="#open"/></svg></button><button><svg><use href="#cab1"/></svg></button><button><svg><use href="#cab2"/></svg></button><button><svg><use href="#save"/></svg></button><button><svg><use href="#report"/></svg></button><button><svg><use href="#print"/></svg></button><button><svg><use href="#preview"/></svg></button><i class="sep"></i><button><svg><use href="#undo"/></svg></button><button><svg><use href="#redo"/></svg></button><i class="sep"></i><button><svg><use href="#selpar"/></svg></button><button><svg><use href="#selell"/></svg></button><button><svg><use href="#selcir"/></svg></button><button><svg><use href="#selpm"/></svg></button><button><svg><use href="#selwin"/></svg></button><i class="sep"></i><button class="on"><svg><use href="#list"/></svg></button><button class="on"><svg><use href="#table"/></svg></button><i class="sep"></i><button><svg><use href="#lcase"/></svg></button>
<select class="combo" aria-label="Lastfall"><option></option></select>
<button><svg><use href="#prev"/></svg></button><button><svg><use href="#next"/></svg></button><button><svg><use href="#eye1"/></svg></button><button><svg><use href="#xx1"/></svg></button><button><svg><use href="#eye2"/></svg></button><button><svg><use href="#xx2"/></svg></button><i class="sep"></i><button><svg><use href="#glass"/></svg></button><button><svg><use href="#abac"/></svg></button><button><svg><use href="#abac2"/></svg></button>
</div>
<div class="group"><i class="grip"></i>
<button><svg><use href="#hand"/></svg></button><button><svg><use href="#snap"/></svg></button><button class="on"><svg><use href="#wp1"/></svg></button><button><svg><use href="#wp2"/></svg></button><button><svg><use href="#wp3"/></svg></button><button><svg><use href="#wp4"/></svg></button><button><svg><use href="#axw"/></svg></button><i class="sep"></i><button><svg><use href="#move"/></svg></button><button><svg><use href="#rot"/></svg></button><button><svg><use href="#mir"/></svg></button><button><svg><use href="#cross"/></svg></button><button><svg><use href="#info"/></svg></button><button><svg><use href="#cfg"/></svg></button><button><svg><use href="#gears"/></svg></button>
</div>
<div class="group"><i class="grip"></i>
<button><svg><use href="#mdown"/></svg></button><button><svg><use href="#mup"/></svg></button><button><svg><use href="#pdf1"/></svg></button><button><svg><use href="#pdf2"/></svg></button>
</div>
</div>

<div class="toolrow second">
<div class="group"><i class="grip"></i>
<button class="dd"><svg><use href="#node"/></svg></button><button><svg><use href="#line"/></svg></button><button class="dd"><svg><use href="#memb"/></svg></button><button class="dd"><svg><use href="#poly"/></svg></button><i class="sep"></i><button><svg><use href="#nsup"/></svg></button><button><svg><use href="#lsup"/></svg></button><button><svg><use href="#fsup"/></svg></button><i class="sep"></i><button class="dd"><svg><use href="#dim"/></svg></button><button><svg><use href="#lead"/></svg></button><button><svg><use href="#grid"/></svg></button><i class="sep"></i><button class="dd"><svg><use href="#surf"/></svg></button><button class="dd"><svg><use href="#opn"/></svg></button><button class="dd"><svg><use href="#shell"/></svg></button><button><svg><use href="#solid"/></svg></button><button class="dd"><svg><use href="#solid2"/></svg></button><i class="sep"></i><button class="dd"><svg><use href="#comb"/></svg></button><button><svg><use href="#nload"/></svg></button><button class="dim"><svg><use href="#mload"/></svg></button><button><svg><use href="#mload"/></svg></button><button><svg><use href="#sload"/></svg></button><button class="dd"><svg><use href="#vload"/></svg></button>
</div>
<div class="group"><i class="grip"></i>
<button><svg><use href="#pan"/></svg></button><button><svg><use href="#zoomw"/></svg></button><button><svg><use href="#zoomx"/></svg></button><button><svg><use href="#cube"/></svg></button><button><svg><use href="#boxes"/></svg></button><i class="sep"></i><button><svg><use href="#vx"/></svg></button><button><svg><use href="#vy"/></svg></button><button><svg><use href="#vz"/></svg></button><button class="dd"><svg><use href="#vmx"/></svg></button><button class="dd"><svg><use href="#micro"/></svg></button><i class="sep"></i><button class="dd"><svg><use href="#blk"/></svg></button>
</div>
<div class="group"><i class="grip"></i>
<button><svg><use href="#frame"/></svg></button><button><svg><use href="#tube"/></svg></button><i class="sep"></i><button><svg><use href="#ibeam"/></svg></button><button><svg><use href="#rainb"/></svg></button><button><svg><use href="#rcube"/></svg></button><button><svg><use href="#react"/></svg></button><button><svg><use href="#stress"/></svg></button><button class="dd"><svg><use href="#four"/></svg></button><button><svg><use href="#wave"/></svg></button><button><svg><use href="#tbl4"/></svg></button><i class="sep"></i><button><svg><use href="#page"/></svg></button><button class="dd"><svg><use href="#magic"/></svg></button><button class="dd"><svg><use href="#spec"/></svg></button>
</div>
</div>

<main class="work">
<aside class="nav">
<div class="panelhead"><span>Projekt-Navigator - Daten</span><svg viewBox="0 0 10 10"><path d="M2 6h6M3.500 6V1h3.500v5M5 6v4" fill="none" stroke="#555"/></svg><svg viewBox="0 0 10 10"><path d="M1 1l8 8M9 1L1 9" stroke="#555"/></svg></div>
<div class="treebox">
<ul class="tree root"><li><div class="row"><b class="ex minus"></b><svg><use href="#t-root"/></svg><strong>Extrusion* [Downloads]</strong></div>
<ul>
<li><div class="row"><b class="ex minus"></b><svg><use href="#foldo"/></svg><span>Modelldaten</span></div>
<ul>
<li><div class="row"><b class="ex plus"></b><svg><use href="#f-node"/></svg><span>Knoten</span></div></li>
<li><div class="row"><b class="ex plus"></b><svg><use href="#f-line"/></svg><span>Linien</span></div></li>
<li><div class="row"><b class="ex plus"></b><svg><use href="#f-mat"/></svg><span>Materialien</span></div></li>
<li><div class="row"><b class="ex plus"></b><svg><use href="#f-surf"/></svg><span>Flächen</span></div></li>
<li><div class="row"><svg><use href="#f-vol"/></svg><span>Volumenkörper</span></div></li>
<li><div class="row"><svg><use href="#f-opn"/></svg><span>Öffnungen</span></div></li>
<li><div class="row"><svg><use href="#f-ns"/></svg><span>Knotenlager</span></div></li>
<li><div class="row"><svg><use href="#f-ls"/></svg><span>Linienlager</span></div></li>
<li><div class="row"><svg><use href="#f-fs"/></svg><span>Flächenlager</span></div></li>
<li><div class="row"><svg><use href="#f-wh"/></svg><span>Liniengelenke</span></div></li>
<li><div class="row"><svg><use href="#f-surf"/></svg><span>Veränderliche Dicken</span></div></li>
<li><div class="row"><svg><use href="#f-orth"/></svg><span>Orthotrope Flächen und Membranen</span></div></li>
<li><div class="row"><svg><use href="#f-i"/></svg><span>Querschnitte</span></div></li>
<li><div class="row"><svg><use href="#f-eg"/></svg><span>Stabendgelenke</span></div></li>
<li><div class="row"><svg><use href="#f-mem"/></svg><span>Stabexzentrizitäten</span></div></li>
<li><div class="row"><svg><use href="#f-line"/></svg><span>Stabteilungen</span></div></li>
<li><div class="row"><svg><use href="#f-mem"/></svg><span>Stäbe</span></div></li>
<li><div class="row"><svg><use href="#f-rib"/></svg><span>Rippen</span></div></li>
<li><div class="row"><svg><use href="#f-gr"/></svg><span>Stabbettungen</span></div></li>
<li><div class="row"><svg><use href="#f-rv"/></svg><span>Stabnichtlinearitäten</span></div></li>
<li><div class="row"><svg><use href="#f-set"/></svg><span>Stabsätze</span></div></li>
<li><div class="row"><svg><use href="#f-surf"/></svg><span>Durchdringungen der Flächen</span></div></li>
<li><div class="row"><svg><use href="#f-mesh"/></svg><span>FE-Netzverdichtungen</span></div></li>
<li><div class="row"><svg><use href="#fold"/></svg><span>Knotenfreigaben</span></div></li>
<li><div class="row"><svg><use href="#fold"/></svg><span>Linienfreigabe-Typen</span></div></li>
<li><div class="row"><svg><use href="#f-wh"/></svg><span>Linienfreigaben</span></div></li>
<li><div class="row"><svg><use href="#f-rel"/></svg><span>Flächenfreigabe-Typen</span></div></li>
<li><div class="row"><svg><use href="#f-rel"/></svg><span>Flächenfreigaben</span></div></li>
<li><div class="row"><svg><use href="#fold"/></svg><span>Verbindung von zwei Stäben</span></div></li>
<li><div class="row"><svg><use href="#fold"/></svg><span>Anschlüsse</span></div></li>
<li><div class="row"><svg><use href="#f-cpl"/></svg><span>Knotenkopplungen</span></div></li>
</ul></li>
<li><div class="row"><b class="ex minus"></b><svg><use href="#foldo"/></svg><span>Lastfälle und Kombinationen</span></div>
<ul>
<li><div class="row"><svg><use href="#t-lc"/></svg><span>Lastfälle</span></div></li>
<li><div class="row"><svg><use href="#combg"/></svg><span>Lastkombinationen</span></div></li>
<li><div class="row"><svg><use href="#combb"/></svg><span>Ergebniskombinationen</span></div></li>
</ul></li>
<li><div class="row"><svg><use href="#fold"/></svg><span>Lasten</span></div></li>
<li><div class="row"><svg><use href="#fold"/></svg><span>Ergebnisse</span></div></li>
<li><div class="row"><svg><use href="#fold"/></svg><span>Schnitte</span></div></li>
<li><div class="row"><svg><use href="#fold"/></svg><span>Glättungsbereiche</span></div></li>
<li><div class="row"><svg><use href="#fold"/></svg><span>Ausdruckprotokolle</span></div></li>
<li><div class="row"><b class="ex plus"></b><svg><use href="#fold"/></svg><span>Hilfsobjekte</span></div></li>
<li><div class="row"><b class="ex minus"></b><svg><use href="#foldo"/></svg><span>Zusatzmodule</span></div>
<ul>
<li><div class="row"><svg><use href="#t-m1"/></svg><span>RF-STAHL Flächen - Allgemeine Spannungsanalyse</span></div></li>
<li><div class="row"><svg><use href="#t-m2"/></svg><span>RF-STAHL Stäbe - Allgemeine Spannungsanalyse</span></div></li>
</ul></li>
</ul></li></ul>
<div class="vscroll"><svg viewBox="0 0 10 10"><path d="M1.500 7L5 3.500 8.500 7" fill="none" stroke="#444" stroke-width="1.600"/></svg><i></i></div>
</div>
</aside>

<div class="center">
<div class="mdi">
<section class="win">
<div class="wintitle"><svg class="bridge" viewBox="0 0 16 13"><path d="M0 0h16v13H0z" fill="#1f2f6b"/><path d="M0 7.500h16M0 11.500h16M6 1v11M6 2L1 7M10 3l5 4M8 3l4 4M4 12h3" stroke="#fff" stroke-width="1.300" fill="none"/></svg><span>Extrusion*</span></div>
<div class="view">
<svg viewBox="300 134 794 759" preserveAspectRatio="xMinYMin slice">
<path d="M300 134h4000v4000H300z" fill="#0a0a0a"/>
<path d="M689 134l405 101M1094 606L740 908" stroke="#2e2e2e" stroke-width="1.200"/>
<path d="M300 471.500L1094 668M310 474L706 134" stroke="#006e6e" stroke-width="1.400"/>
<use href="#e32" x="348" y="-262"/>
<path d="M349 440l118-101.500 112-15 146 36.500 33 52-118 101-112 15-146-36z" fill="#a3a000" stroke="#f4f4c8"/>
<path d="M347 439h3v3h-3zM466 337h3v3h-3zM578 322h3v3h-3zM724 359h3v3h-3zM757 411h3v3h-3zM381 491h3v3h-3z" fill="#f00"/>
<use href="#triad" x="310" y="474"/><use href="#triad" x="356" y="762"/>
</svg>
</div>
</section>
<section class="win">
<div class="wintitle"><svg class="bridge" viewBox="0 0 16 13"><path d="M0 0h16v13H0z" fill="#1f2f6b"/></svg>
<div class="mdictl"><button aria-label="Minimieren"><svg viewBox="0 0 12 8"><path d="M1.500 4.500h8v2h-8z" fill="#fff" stroke="#444"/></svg></button><button aria-label="Maximieren"><svg viewBox="0 0 12 8"><path d="M1.500 .5h8v6h-8zM4.500 3h2v1.500h-2z" fill="#fff" stroke="#444"/></svg></button><button class="x" aria-label="Schließen"><svg viewBox="0 0 12 8"><path d="M2 .5l7 7M9 .5l-7 7" stroke="#fff" stroke-width="1.800"/></svg></button></div></div>
<div class="view">
<svg viewBox="1115 134 796 759" preserveAspectRatio="xMinYMin slice">
<path d="M1115 134h4000v4000H1115z" fill="#0a0a0a"/>
<path d="M1115 240l796 198" stroke="#2e2e2e" stroke-width="1.200"/>
<path d="M1115 674L1911 873M1115 796L1891 134" stroke="#006e6e" stroke-width="1.400"/>
<use href="#e32" x="1265" y="-35"/>
<path d="M1265 448l118-101 112-15 146 36 33 52v220l-118 101-112 15-146-36-33-52z" fill="#9b9b9a"/>
<path d="M1298 501l85 21v45l-85 73z" fill="#a3a3a3"/>
<path d="M1556 521l85-73v140l-85-21z" fill="#a1a1a1"/>
<path d="M1444 536l51-7v22l-51 7z" fill="#7b7b7a"/>
<path d="M1495 529l61-8v46l-61-15z" fill="#939392"/>
<path d="M1265 448l118-101 112-15 146 36 33 52-118 101-112 15-146-35z" fill="#828281"/>
<path d="M1383 347l112-15v197l-51 7-61-15z" fill="#7b7b79"/>
<path d="M1265 668l118-101 112-15 146 36 33 52-118 101-112 15-146-36z" fill="#868686"/>
<path d="M1298 640l85-73 61-8v197l-146-36z" fill="#919190"/>
<path d="M1444 559l51-7 61 15v174l-112 15z" fill="#797979"/>
<path d="M1383 567L1690 305" stroke="#7f9290" stroke-width="1" opacity=".5"/>
<g fill="none" stroke="#a6a6a8" stroke-dasharray="12 4"><path d="M1285 448l110-94 100-13 130 33 29 44-108 95-100 14-133-34z"/><path d="M1285 668l110-94 100-13 130 33 29 44-108 95-100 14-133-34z"/><path d="M1271 462v188l107-90V362M1389 358v202l100-13V341M1305 509v199l131 33V541M1449 540v209l101-13V528M1561 530v194l106-88V432" opacity=".6"/></g>
<g fill="none" stroke="#ff0" stroke-width="2" stroke-linejoin="round">
<path d="M1265 448l118-101 112-15 146 36 33 52-118 101-112 15.500-146-35.500z"/>
<path d="M1265 668l118-101 112-15 146 36 33 52-118 101-112 15.500-146-35.500z"/>
<path d="M1265 448v220M1383 347v220M1495 332v220M1641 368v220M1674 420v220M1556 521v220M1444 536v220M1298 501v220"/>
</g>
<path d="M1264 446h2v2h-2zM1382 345h2v2h-2zM1494 330h2v2h-2zM1640 366h2v2h-2zM1674 419h2v2h-2zM1674 639h2v2h-2zM1556 741h2v2h-2zM1443 757h2v2h-2zM1297 720h2v2h-2zM1263 667h2v2h-2z" fill="#f00"/>
<circle cx="1469" cy="544" r="2.500" fill="#c9c93a"/>
<use href="#triad" x="1227" y="701"/><use href="#triad" x="1171" y="762"/>
</svg>
</div>
</section>
</div>

<section class="tablepanel">
<div class="panelhead"><span>1.1 Knoten</span><svg viewBox="0 0 10 10"><path d="M2 6h6M3.500 6V1h3.500v5M5 6v4" fill="none" stroke="#555"/></svg><svg viewBox="0 0 10 10"><path d="M1 1l8 8M9 1L1 9" stroke="#555"/></svg></div>
<div class="toolrow"><div class="group"><i class="grip"></i>
<button class="on"><svg><use href="#b-edit"/></svg></button><button><svg><use href="#b-ins"/></svg></button><button><svg><use href="#b-dn"/></svg></button><button><svg><use href="#b-dn"/></svg></button><button><svg><use href="#b-x"/></svg></button><i class="sep"></i><button><svg><use href="#b-col"/></svg></button><button><svg><use href="#b-col"/></svg></button><button class="on"><svg><use href="#b-edit"/></svg></button><button class="on"><svg><use href="#b-edit"/></svg></button><button><svg><use href="#b-x"/></svg></button><i class="sep"></i><button><svg><use href="#b-x"/></svg></button><button><svg><use href="#b-x"/></svg></button><button><svg><use href="#b-x"/></svg></button><i class="sep"></i><button><svg><use href="#b-x"/></svg></button><i class="sep"></i><button><svg><use href="#b-dn"/></svg></button><button><svg><use href="#b-dn"/></svg></button><button><svg><use href="#b-dn"/></svg></button><i class="sep"></i><button><svg><use href="#b-x"/></svg></button><button><svg><use href="#b-x"/></svg></button><i class="sep"></i><button><svg><use href="#b-x"/></svg></button><i class="sep"></i><button><svg><use href="#b-x"/></svg></button><i class="sep short"></i><button><svg><use href="#glass"/></svg></button><button><svg><use href="#b-xls"/></svg></button><button><svg><use href="#b-calc"/></svg></button><i class="sep"></i><button><svg><use href="#b-ab"/></svg></button><button><svg><use href="#b-fx"/></svg></button><button><svg><use href="#b-fxx"/></svg></button><i class="sep"></i><button><svg><use href="#b-lock"/></svg></button>
</div></div>
</section>
</div>
</main>

<div class="menu ctx">
<button class="mi"><svg><use href="#c-edit"/></svg><span>Fläche bearbeiten...</span></button>
<button class="mi"><svg><use href="#c-del"/></svg><span>Fläche löschen</span><kbd>Entf</kbd></button>
<hr>
<button class="mi sub"><svg></svg><span>FE-Netzverdichtung</span></button>
<hr>
<button class="mi off"><svg><use href="#c-int"/></svg><span>Durchdringung erzeugen</span></button>
<button class="mi off"><svg><use href="#c-intx"/></svg><span>Durchdringung löschen</span></button>
<button class="mi"><svg><use href="#c-reg"/></svg><span>Regenerieren</span></button>
<hr>
<button class="mi off"><svg><use href="#c-vol"/></svg><span>Volumenkörper mit Kontakt erzeugen...</span></button>
<hr>
<button class="mi sub hot"><svg></svg><span>Extrudieren</span></button>
<hr>
<button class="mi"><svg><use href="#c-axis"/></svg><span>Lokales Achsensystem umkehren</span></button>
<button class="mi off"><svg><use href="#c-div"/></svg><span>Fläche gleichmäßig teilen...</span></button>
<button class="mi off"><svg></svg><span>Fläche mittels integrierter Linien teilen...</span></button>
<hr>
<button class="mi"><svg><use href="#c-scale"/></svg><span>Schwerpunkt und Infos...</span></button>
<hr>
<button class="mi"><svg><use href="#move"/></svg><span>Verschieben/Kopieren...</span></button>
<button class="mi"><svg><use href="#rot"/></svg><span>Rotieren...</span></button>
<button class="mi"><svg><use href="#mir"/></svg><span>Spiegeln...</span></button>
<hr>
<button class="mi"><svg></svg><span>Lokale Achsensysteme ein/aus</span></button>
<hr>
<button class="mi"><svg><use href="#c-disp"/></svg><span>Anzeigeeigenschaften...</span></button>
<hr>
<button class="mi"><svg><use href="#microy"/></svg><span>Sichtbarkeit mittels selektierter Objekte</span></button>
<button class="mi"><svg><use href="#microx"/></svg><span>Sichtbarkeit mittels Ausblenden von selektierten Objekten</span></button>
</div>

<div class="menu subm">
<button class="mi hot"><svg><use href="#c-ev"/></svg><span>Volumen</span></button>
<button class="mi"><svg><use href="#c-eh"/></svg><span>Hülle</span></button>
<button class="mi"><svg><use href="#c-es"/></svg><span>Stäbe</span></button>
</div>

<form class="dialog">
<h2>Extrudieren - Volumenkörper</h2>
<div class="dbody">
<fieldset><legend>Höhe</legend>
<div class="field"><label for="h">h :</label><div class="num"><mark><input id="h" value="-3.000"></mark><i class="spin"></i><i class="more"></i></div><span>[m]</span></div>
<label class="chk gap"><input type="checkbox" checked>Schrittweise</label>
<div class="field"><label for="dh">Δh :</label><div class="num"><input id="dh" value="0.200"><i class="spin"></i></div><span>[m]</span></div>
</fieldset>
<fieldset><legend>Material</legend>
<label class="chk mat"><input type="checkbox">Anders als Basisfläche</label>
<div class="matsel" role="combobox" aria-label="Material"><i class="swatch"></i><span class="c1">1</span><span class="c2">Beton C30/37</span><span class="c3">EN 1992-1-1</span><svg viewBox="0 0 10 10"><path d="M1 3l4 4 4-4" fill="none" stroke="#888"/></svg></div>
<div class="matbtn"><button type="button" disabled aria-label="Bibliothek"><svg viewBox="0 0 16 16"><path d="M1 13L3 3q3-1 4 1l1 9q-3-2-7 0zM8 13L7 4q3-3 5-1l3 10q-4-2-7 0z" fill="#e4e4dc" stroke="#8a8a84"/></svg></button><button type="button" disabled aria-label="Neu"><svg viewBox="0 0 16 16"><path d="M4.500 4.500h11v10h-11z" fill="#e0e0dc" stroke="#8c8c8c"/><path d="M4 5h12v2H4z" fill="#b5b5b5"/><path d="M3 0v7M0 3h7M1 1l5 5M6 1L1 6" stroke="#8c8c8c"/></svg></button><button type="button" disabled aria-label="Bearbeiten"><svg viewBox="0 0 16 16"><path d="M2.500 1.500h13v12h-13z" fill="#e0e0dc" stroke="#8c8c8c"/><path d="M2 2h14v2H2z" fill="#a5a5a5"/><path d="M0 7q5-2 10-1l5 3-5 1-8 1z" fill="#b5b5b5" stroke="#888"/></svg></button></div>
</fieldset>
<fieldset><legend>Flächentyp</legend>
<label class="chk top"><input type="checkbox" checked><span>Alle Flächen des Volumens zu<br>Null-Flächen machen</span></label>
</fieldset>
<hr>
<div class="actions"><button type="button" class="primary">Anwenden</button><button type="button">Abbrechen</button></div>
</div>
</form>

<svg class="overlay" aria-hidden="true">
<defs><filter id="sh" x="-50%" y="-50%" width="200%" height="200%"><feDropShadow dx="4" dy="5" stdDeviation="2" flood-opacity=".5"/></filter></defs>
<g fill="none" stroke="#ff9b00" stroke-width="3"><path d="M848 621C851 430 885 352 982 347M1202 343C1258 339 1271 360 1296 390"/></g>
<path d="M981 337l16 8-16 8z" fill="#ff9b00" filter="url(#sh)"/><path d="M1304 402l-14-8 13-9z" fill="#ff9b00"/>
<use href="#cursor" x="1136" y="118" width="13" height="20"/><use href="#cursor" x="933" y="649" width="13" height="20"/>
</svg>
</body>
</html>
```
FILE: styles.css
```css
* { box-sizing: border-box; }
html, body { height: 100%; }
body {
  margin: 0;
  display: flex;
  flex-direction: column;
  overflow: hidden;
  position: relative;
  background: #cdd1db;
  font: 11px/18px "Open Sans", "Noto Sans", sans-serif;
  color: #000;
}
button { font: inherit; color: inherit; border: 0; background: none; padding: 0; margin: 0; }
ul { list-style: none; margin: 0; padding: 0; }
.defs { position: absolute; width: 0; height: 0; }
.sprite { display: none; }

.titlebar { display: flex; align-items: center; height: 23px; background: #fff; padding-left: 2px; flex: none; }
.appicon { width: 16px; height: 16px; margin-right: 5px; }
.titlebar h1 { flex: 1; margin: 0; font-size: 11px; font-weight: 400; }
.winctl { display: flex; }
.winctl button { width: 46px; height: 22px; display: grid; place-items: center; }
.winctl svg { width: 10px; height: 10px; }

.menubar { display: flex; align-items: center; height: 25px; padding-bottom: 2px; flex: none; color: #454a5a; }
.menubar a { color: inherit; text-decoration: none; padding: 0 7px; }
.grip { width: 10px; height: 14px; flex: none; align-self: center; background: radial-gradient(circle at 5px 2px, #a3a9b8 1px, transparent 2px) 0 0 / 10px 4px; }

.toolrow { display: flex; flex: none; height: 25px; }
.group {
  display: flex;
  align-items: center;
  height: 25px;
  padding-right: 2px;
  border-radius: 2px;
  background: linear-gradient(#edf1f9, #e0e4ed 50%, #cfd3dd);
  border-bottom: 1px solid #a9acbb;
}
.second .group { padding-top: 2px; }
.group button { width: 22px; height: 22px; flex: none; display: grid; place-items: center; }
.group svg { width: 16px; height: 16px; }
.group .on { background: linear-gradient(#fbcf9c, #ffbe62 50%, #ffe7a2); border: 1px solid #a9a18c; }
.group .dim { opacity: .4; }
.group .dd { width: 35px; display: flex; align-items: center; padding-left: 4px; gap: 6px; }
.dd::after { content: ""; border: 3px solid transparent; border-top: 4px solid #7c818d; border-bottom: 0; }
.sep { width: 8px; height: 15px; flex: none; background: linear-gradient(90deg, transparent 3px, #a9aebc 3px, #a9aebc 4px, #fff 4px, #fff 5px, transparent 5px); }
.sep.short { width: 5px; }
.combo {
  width: 216px;
  height: 19px;
  margin: 0 1px;
  border: 1px solid #a5a9b0;
  border-radius: 0;
  appearance: none;
  background: linear-gradient(-135deg, #777 50%, transparent 50%) right 7px top 7px / 3px 3px no-repeat, linear-gradient(135deg, #777 50%, transparent 50%) right 4px top 7px / 3px 3px no-repeat, #efefef;
}

.work { flex: 1; min-height: 0; display: flex; gap: 5px; }
.nav { width: 285px; flex: none; display: flex; flex-direction: column; background: #edf0f8; border: 1px solid #a3a8b5; border-left: 0; padding: 1px 3px 0 1px; }
.panelhead { display: flex; align-items: center; gap: 8px; height: 19px; flex: none; background: #b8bfca; color: #454a55; padding: 0 6px 0 3px; }
.panelhead span { flex: 1; }
.panelhead svg { width: 9px; height: 9px; }
.nav .panelhead { margin-right: -3px; }
.treebox { flex: 1; min-height: 0; margin: 3px 0 0 2px; display: flex; background: #fbfbf3; border: 1px solid #8b8e96; border-bottom: 0; overflow: hidden; }
.tree.root { flex: 1; min-width: 0; overflow: hidden; padding-left: 5px; }
.tree li { position: relative; }
.tree ul { margin-left: 19px; }
.tree li::before { content: ""; position: absolute; left: 6px; top: 0; bottom: 0; border-left: 1px dotted #666; }
.tree li:last-child::before { bottom: auto; height: 9px; }
.row { position: relative; display: flex; align-items: center; height: 18px; padding-left: 18px; white-space: nowrap; }
.row::before { content: ""; position: absolute; left: 7px; top: 10px; width: 10px; border-top: 1px dotted #666; }
.row svg { width: 16px; height: 16px; margin-right: 4px; flex: none; }
.row strong { font-weight: 700; }
.ex { position: absolute; left: 2px; top: 5px; width: 9px; height: 9px; border: 1px solid #8e8f8f; border-radius: 1px; background: linear-gradient(#3c5aa0, #3c5aa0) center / 5px 1px no-repeat, #fff; }
.ex.plus { background: linear-gradient(#3c5aa0, #3c5aa0) center / 5px 1px no-repeat, linear-gradient(#3c5aa0, #3c5aa0) center / 1px 5px no-repeat, #fff; }
.vscroll { width: 15px; flex: none; display: flex; flex-direction: column; align-items: center; background: #f0f0f0; }
.vscroll svg { width: 9px; height: 9px; margin: 5px 0 11px; }
.vscroll i { width: 100%; height: 54%; background: #cdcdcd; }

.center { flex: 1; min-width: 0; display: flex; flex-direction: column; gap: 4px; }
.mdi { flex: 1; min-height: 0; display: flex; gap: 1px; background: #c5cad3; border-top: 2px solid #7d828c; }
.win { flex: 1; min-width: 0; display: flex; flex-direction: column; background: #b9d1ea; border: 1px solid #222; border-radius: 6px 6px 0 0; box-shadow: inset 1px 1px #e8f2fb, inset -1px -1px #35c5e0; padding: 0 8px 7px; }
.wintitle { display: flex; align-items: center; gap: 4px; height: 31px; flex: none; margin: 1px -7px 0; padding: 4px 8px 0; background: linear-gradient(#98b3d1, #b9d1ea); border-radius: 5px 5px 0 0; white-space: nowrap; }
.bridge { width: 16px; height: 13px; }
.mdictl { margin-left: auto; display: flex; gap: 1px; }
.mdictl button { width: 33px; height: 17px; display: grid; place-items: center; border: 1px solid #6c7f98; border-radius: 3px; background: linear-gradient(#d4e2f2, #a5bfdd 50%, #b9d1ea); }
.mdictl svg { width: 12px; height: 8px; }
.mdictl .x { background: linear-gradient(#e59a88, #c4432b 50%, #d3583c); border-color: #5a1b12; }
.view { flex: 1; min-height: 0; border: 1px solid #777; border-color: #777 #fff #fff #777; }
.view svg { display: block; width: 100%; height: 100%; }
.tablepanel { flex: none; border-top: 1px solid #eef1f8; padding-top: 2px; height: 43px; overflow: hidden; }
.tablepanel .toolrow { margin-top: 1px; background: linear-gradient(#edf1f9, #d5d9e3); }

.menu { position: absolute; background: #fafafa; border: 1px solid #85878c; padding: 2px; box-shadow: 3px 3px 0 rgba(90, 90, 90, .75); }
.ctx { left: 448px; top: 442px; width: 381px; }
.subm { left: 827px; top: 629px; width: 128px; }
.menu .mi { display: flex; align-items: center; width: 100%; height: 22px; text-align: left; color: #454a5a; border: 1px solid transparent; padding-right: 10px; position: relative; }
.menu::before { content: ""; position: absolute; left: 1px; top: 1px; bottom: 1px; width: 25px; background: #e9edf7; border-right: 1px solid #c5c5c9; }
.mi svg { width: 16px; height: 16px; margin: 0 10px 0 2px; flex: none; }
.mi span { flex: 1; white-space: nowrap; }
.mi kbd { font: inherit; }
.menu .off { color: #a5a5a5; }
.menu .hot { border: 1px solid #d8bf70; border-radius: 2px; background: linear-gradient(#fffbe8, #fff0b8 45%, #ffd53c 55%, #ffd965 75%, #ffeaa5); }
.mi.sub::after { content: ""; position: absolute; right: 2px; top: 6px; border: 4px solid transparent; border-left: 4px solid #454a5a; border-right: 0; }
.ctx hr { position: relative; height: 1px; border: 0; background: #bfbfbf; margin: 3px 0 4px 30px; }

.dialog { position: absolute; left: 975px; top: 105px; width: 227px; background: #f0f0f0; border: 1px solid #1883d7; border-radius: 3px; overflow: hidden; font: 10px/13px "DejaVu Sans Condensed", "Open Sans", sans-serif; }
.dialog h2 { margin: 0; height: 25px; padding-left: 3px; background: #fff; font: 11px/22px "Open Sans", sans-serif; }
.dbody { padding: 7px 7px 13px 9px; }
fieldset { margin: 0 0 9px; padding: 0 0 6px 1px; min-width: 0; border: 0; border-right: 1px solid #abaae8; border-bottom: 1px solid #abaae8; background: #eff3f9; }
legend { float: left; width: calc(100% + 2px); height: 17px; margin: 0 -1px 4px; padding: 2px; color: #1e395b; background: #dbe4f3; clip-path: polygon(0 0, calc(100% - 10px) 0, 100% 10px, 100% 100%, 0 100%); }
legend + * { clear: both; }
.field { display: flex; align-items: center; height: 21px; }
.field > label { width: 25px; font-weight: 700; }
.field > span { margin-left: 5px; }
.num { display: flex; align-items: center; width: 83px; height: 20px; padding: 1px; border: 1px solid #7f9db9; background: #fff; }
.num mark { flex: 1; display: flex; justify-content: flex-end; background: none; }
.num input { min-width: 0; width: 100%; height: 14px; border: 0; padding: 0 5px 0 0; text-align: right; background: none; font: 11px/14px "DejaVu Sans Condensed", sans-serif; color: #000; }
.num mark input { width: 35px; padding: 0; margin-right: 3px; background: #0078d7; color: #fff; border-right: 1px solid #f80; }
.spin, .more { width: 13px; height: 16px; flex: none; border: 1px solid #adadad; background: #eee; display: flex; flex-direction: column; justify-content: space-around; align-items: center; }
.spin::before { content: ""; border: 3px solid transparent; border-bottom: 3px solid #000; border-top: 0; }
.spin::after { content: ""; border: 3px solid transparent; border-top: 3px solid #000; border-bottom: 0; }
.more { width: 10px; margin-left: 1px; }
.more::before { content: ""; border: 3px solid transparent; border-left: 3px solid #000; border-right: 0; }
.chk { display: flex; align-items: center; gap: 3px; height: 15px; padding-left: 1px; }
.chk.gap { margin: 13px 0 5px; }
.chk.mat { height: 20px; padding-top: 5px; margin-bottom: 15px; }
.chk.top { align-items: flex-start; height: 34px; padding-top: 8px; }
.chk input { appearance: none; width: 13px; height: 13px; margin: 0; border: 1px solid #333; background: #fff; flex: none; display: grid; place-items: center; }
.chk input:checked::before { content: ""; width: 9px; height: 5px; margin-bottom: 3px; border: solid #222; border-width: 0 0 1px 1px; transform: rotate(-45deg); }
.matsel { display: flex; align-items: center; width: 204px; height: 21px; margin-left: 1px; border: 1px solid #c5c5c5; background: #f0f0f0; color: #777; padding-left: 3px; }
.swatch { width: 13px; height: 13px; border: 1px solid #444; background: #9c9c9c; }
.c1 { width: 19px; text-align: right; padding-right: 5px; }
.c2 { border-left: 1px solid #777; padding-left: 4px; width: 83px; }
.c3 { border-left: 1px solid #777; padding-left: 4px; flex: 1; overflow: hidden; white-space: nowrap; }
.matsel svg { width: 17px; height: 100%; padding: 4px; background: #fff; }
.matbtn { display: flex; gap: 5px; justify-content: flex-end; padding: 5px 3px 1px 0; }
.matbtn button { width: 25px; height: 21px; background: #ccc; border: 1px solid #bfbfbf; display: grid; place-items: center; }
.matbtn svg { width: 15px; height: 15px; }
.dbody > hr { margin: 0; border: 0; height: 2px; border-top: 1px solid #a0a0a0; border-bottom: 1px solid #fff; }
.actions { display: flex; justify-content: flex-end; gap: 10px; padding: 11px 1px 0 0; }
.actions button { width: 73px; height: 21px; border: 1px solid #adadad; background: #e1e1e1; }
.actions .primary { border: 2px solid #0078d7; }
.overlay { position: absolute; inset: 0; width: 100%; height: 100%; pointer-events: none; }
```
